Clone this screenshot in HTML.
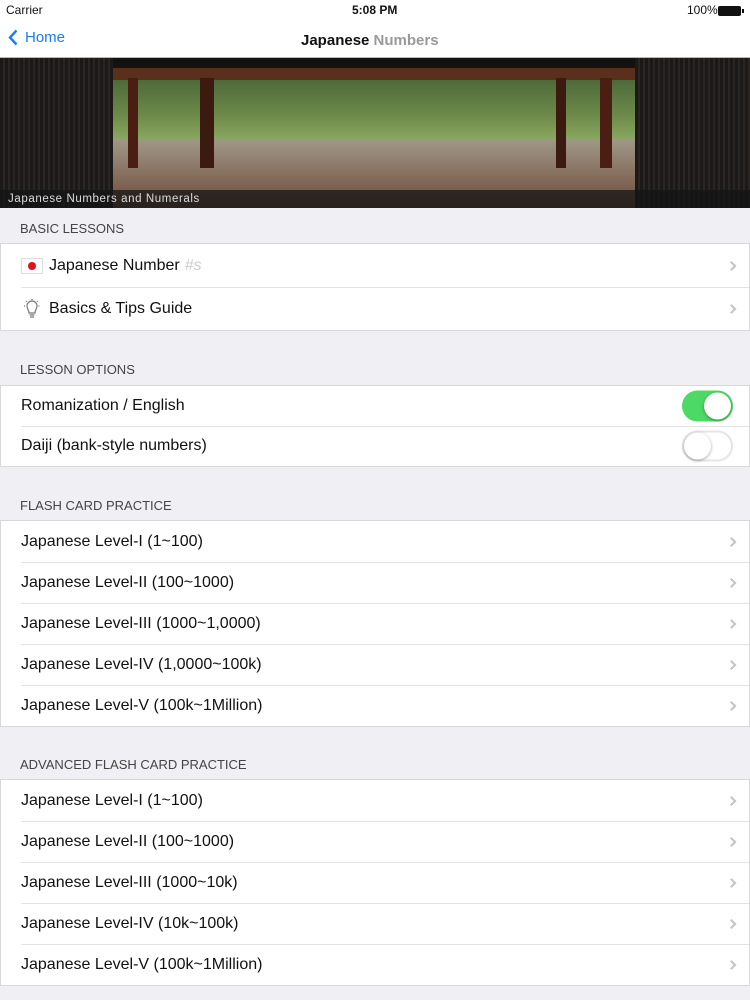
<!DOCTYPE html>
<html><head><meta charset="utf-8"><style>
*{margin:0;padding:0;box-sizing:border-box}
body{width:750px;height:1000px;background:#efeff4;font-family:"Liberation Sans",sans-serif;color:#111;position:relative;overflow:hidden}
.abs{position:absolute}
.status{top:0;left:0;width:750px;height:20px;background:#fff;font-size:12px}
.nav{top:20px;left:0;width:750px;height:38px;background:#fff;border-bottom:1px solid #bbb}
.hdr{position:absolute;left:20px;font-size:13px;color:#444}
.grp{position:absolute;left:0;width:750px;background:#fff;border:1px solid #d8d8dc}
.row{position:relative;font-size:16px;display:flex;align-items:center;padding-left:20px}
.row+.row:before{content:"";position:absolute;top:0;left:20px;right:0;border-top:1px solid #e2e2e6}
.chev{position:absolute;right:14px;top:50%;width:7px;height:7px;border-right:2px solid #c4c4c8;border-top:2px solid #c4c4c8;transform:translateY(-50%) rotate(45deg)}
.sw{position:absolute;right:16px;top:50%;transform:translateY(-50%);width:51px;height:31px;border-radius:16px}
.sw i{position:absolute;top:2px;width:27px;height:27px;border-radius:50%;background:#fff;box-shadow:0 1px 3px rgba(0,0,0,.35)}
</style></head><body>
<div class="abs status"><span class="abs" style="left:6px;top:3px">Carrier</span><span class="abs" style="left:352px;top:3px;font-weight:bold">5:08 PM</span><span class="abs" style="left:687px;top:3px">100%</span><span class="abs" style="left:718px;top:6px;width:23px;height:10px;background:#111;border-radius:2px"></span><span class="abs" style="left:742px;top:9px;width:2px;height:4px;background:#111"></span></div>
<div class="abs nav"><svg class="abs" style="left:8px;top:9px" width="10" height="17" viewBox="0 0 10 17"><path d="M8.5 1.5 L2 8.5 L8.5 15.5" fill="none" stroke="#1a7cf5" stroke-width="2.4"/></svg><span class="abs" style="left:25px;top:9px;font-size:15px;color:#1a7cf5">Home</span><span class="abs" style="left:301px;top:12px;font-size:15px;font-weight:bold">Japanese <span style="color:#999">Numbers</span></span></div>
<div class="abs" style="top:58px;left:0;width:750px;height:150px;background:#141210">
 <div class="abs" style="left:0;top:0;width:113px;height:150px;background:repeating-linear-gradient(90deg,#1c1a18 0 3px,#2a2624 3px 5px)"></div>
 <div class="abs" style="left:635px;top:0;width:115px;height:150px;background:repeating-linear-gradient(90deg,#1c1a18 0 3px,#2a2624 3px 5px)"></div>
 <div class="abs" style="left:113px;top:10px;width:522px;height:12px;background:#5a2f1c"></div>
 <div class="abs" style="left:113px;top:22px;width:522px;height:60px;background:linear-gradient(180deg,#4d6a3a,#6e8a4a 60%,#8aa860)"></div>
 <div class="abs" style="left:113px;top:82px;width:522px;height:68px;background:linear-gradient(180deg,#9f9786,#8c7868 40%,#6b4a3a)"></div>
 <div class="abs" style="left:128px;top:20px;width:10px;height:90px;background:#4a1e12"></div>
 <div class="abs" style="left:200px;top:20px;width:14px;height:90px;background:#3b1a10"></div>
 <div class="abs" style="left:556px;top:20px;width:10px;height:90px;background:#3b1a10"></div>
 <div class="abs" style="left:600px;top:20px;width:12px;height:90px;background:#4a1e12"></div>
 <div class="abs" style="left:0;top:132px;width:750px;height:18px;background:rgba(20,20,20,.75);color:#ddd;font-size:11.5px;letter-spacing:.6px;padding:3px 0 0 8px">Japanese Numbers and Numerals</div>
</div>
<div class="hdr" style="top:221px">BASIC LESSONS</div>
<div class="grp" style="top:243px">
 <div class="row" style="height:43px"><span style="display:inline-block;width:22px;height:16px;border:1px solid #ddd;margin-right:6px;position:relative"><span class="abs" style="left:6px;top:3px;width:8px;height:8px;border-radius:50%;background:#e0101e"></span></span>Japanese Number <span style="color:#ccc;font-style:italic;margin-left:5px">#s</span><i class="chev"></i></div>
 <div class="row" style="height:43px"><svg width="22" height="22" viewBox="0 0 22 22" style="margin-right:6px"><g fill="none" stroke="#777" stroke-width="1.2"><path d="M8 15 C8 12 6 11 6 8 A5 5 0 0 1 16 8 C16 11 14 12 14 15 Z"/><path d="M8.5 17 H13.5 M9 19 H13"/><path d="M11 1 V2.5 M3 8 H4.5 M17.5 8 H19 M5 3 L6 4 M17 3 L16 4" stroke-dasharray="1 1"/></g></svg>Basics &amp; Tips Guide<i class="chev"></i></div>
</div>
<div class="hdr" style="top:362px">LESSON OPTIONS</div>
<div class="grp" style="top:385px">
 <div class="row" style="height:40px">Romanization / English<span class="sw" style="background:#4cd964"><i style="right:2px"></i></span></div>
 <div class="row" style="height:40px">Daiji (bank-style numbers)<span class="sw" style="border:2px solid #e5e5e5;background:#fff"><i style="left:0;top:0"></i></span></div>
</div>
<div class="hdr" style="top:498px">FLASH CARD PRACTICE</div>
<div class="grp" style="top:520px">
 <div class="row" style="height:41px">Japanese Level-I (1~100)<i class="chev"></i></div>
 <div class="row" style="height:41px">Japanese Level-II (100~1000)<i class="chev"></i></div>
 <div class="row" style="height:41px">Japanese Level-III (1000~1,0000)<i class="chev"></i></div>
 <div class="row" style="height:41px">Japanese Level-IV (1,0000~100k)<i class="chev"></i></div>
 <div class="row" style="height:41px">Japanese Level-V (100k~1Million)<i class="chev"></i></div>
</div>
<div class="hdr" style="top:757px">ADVANCED FLASH CARD PRACTICE</div>
<div class="grp" style="top:779px">
 <div class="row" style="height:41px">Japanese Level-I (1~100)<i class="chev"></i></div>
 <div class="row" style="height:41px">Japanese Level-II (100~1000)<i class="chev"></i></div>
 <div class="row" style="height:41px">Japanese Level-III (1000~10k)<i class="chev"></i></div>
 <div class="row" style="height:41px">Japanese Level-IV (10k~100k)<i class="chev"></i></div>
 <div class="row" style="height:41px">Japanese Level-V (100k~1Million)<i class="chev"></i></div>
</div>
</body></html>
